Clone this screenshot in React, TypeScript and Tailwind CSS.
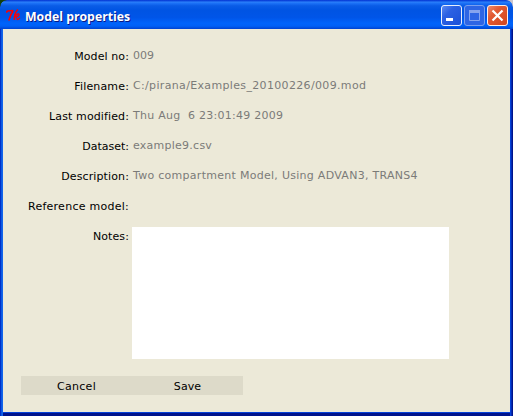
type RowProps = { label: string; value?: string; ls?: string; vs?: string };

function Label({ text, ls = "" }: { text: string; ls?: string }) {
  return (
    <div className="flex w-[126px] shrink-0 justify-end pt-px text-black">
      <span className={ls}>{text}</span>
    </div>
  );
}

function Row({ label, value = "", ls, vs = "" }: RowProps) {
  return (
    <div className="flex h-[30px] whitespace-pre leading-4">
      <Label text={label} ls={ls} />
      <span className={`ml-1 text-[#7b7b78] ${vs}`}>{value}</span>
    </div>
  );
}

function TitleBar() {
  return (
    <div className="flex h-[29px] shrink-0 items-center rounded-t-[7px] bg-[linear-gradient(180deg,#0a3fd8_0%,#0b45dc_3%,#2b80fa_7%,#1a6ff5_12%,#0a5ce6_20%,#0054e3_35%,#0055e8_60%,#0063fb_80%,#0060f6_90%,#0042d0_100%)] pl-[6px] pr-[5px]">
      <svg className="mt-[3px]" width="16" height="16" viewBox="0 0 16 16" fill="none" stroke="#ff0000" strokeLinejoin="bevel">
        <path d="M0.3 4.6 L1.5 3 L7 2.5" strokeWidth="1.7" />
        <path d="M7.2 2.6 L5 6.5 L2.8 12.5" strokeWidth="1.7" />
        <path d="M11.8 1.5 C9.8 3.5 8.3 7.5 8.2 12" strokeWidth="1.4" />
        <path d="M9 8.4 C10 6.2 12.8 5.2 13.2 6.4 C13.4 7.8 11 8.8 9.4 8.8 C11 9 10.4 11.6 11.8 11.6 L14 10" strokeWidth="1.2" />
      </svg>
      <span className="ml-[3px] mt-[2px] flex-1 origin-left scale-x-[0.945] whitespace-pre font-['Open_Sans',sans-serif] text-[13px] font-bold leading-4 text-white [text-shadow:1px_1px_0_#0a1883]">
        Model properties
      </span>
      <div className="mt-[2px] flex gap-[2px]">
        <svg width="21" height="21" viewBox="0 0 21 21">
          <defs>
            <linearGradient id="blue" x1="0" y1="0" x2="1" y2="1">
              <stop offset="0" stopColor="#5f8df2" />
              <stop offset="0.35" stopColor="#2c61e3" />
              <stop offset="1" stopColor="#1a50d8" />
            </linearGradient>
          </defs>
          <rect x="0.5" y="0.5" width="20" height="20" rx="2.5" fill="url(#blue)" stroke="#e8effd" />
          <rect x="5" y="13" width="7" height="3" fill="#fff" />
        </svg>
        <svg width="21" height="21" viewBox="0 0 21 21">
          <rect x="0.5" y="0.5" width="20" height="20" rx="2.5" fill="#2e65e4" stroke="#799eef" />
          <path d="M5.5 5 V15.5 H15.5 V5" fill="none" stroke="#86a4ee" />
          <rect x="5" y="5" width="11" height="3" fill="#86a4ee" />
        </svg>
        <svg width="21" height="21" viewBox="0 0 21 21">
          <defs>
            <linearGradient id="red" x1="0" y1="0" x2="1" y2="1">
              <stop offset="0" stopColor="#ee8f72" />
              <stop offset="0.35" stopColor="#e25a34" />
              <stop offset="1" stopColor="#d0441a" />
            </linearGradient>
          </defs>
          <rect x="0.5" y="0.5" width="20" height="20" rx="2.5" fill="url(#red)" stroke="#fdeeea" />
          <path d="M5.5 5.5 L15.5 15.5 M15.5 5.5 L5.5 15.5" stroke="#fff" strokeWidth="2.2" />
        </svg>
      </div>
    </div>
  );
}

export default function App() {
  return (
    <div className="h-[416px] w-[513px] bg-[linear-gradient(90deg,#143f0c_50%,#c9c5cf_50%)] font-['DejaVu_Sans',sans-serif] text-[11px]">
      <div className="flex h-full w-full flex-col overflow-hidden rounded-t-[7px]">
        <TitleBar />
        <div className="flex flex-1 bg-[linear-gradient(90deg,#0030c8_0px,#0030c8_1px,#0855dd_1px,#1668f0_3px,#0441d8_3px,#0441d8_510px,#0441d8_511px,#00138c_512px)] pl-[3px] pr-[3px]">
          <div className="flex flex-1 flex-col border-b-[3px] border-[#00138c] bg-[#ece9d8] pt-[19px] shadow-[inset_0_-1px_0_#0441d8]">
            <Row label="Model no:" value="009" ls="tracking-[0.1px]" />
            <Row label="Filename:" value="C:/pirana/Examples_20100226/009.mod" ls="tracking-[0.15px]" vs="tracking-[0.34px]" />
            <Row label="Last modified:" value="Thu Aug  6 23:01:49 2009" ls="tracking-[0.12px]" vs="tracking-[0.26px]" />
            <Row label="Dataset:" value="example9.csv" vs="tracking-[0.25px]" />
            <Row label="Description:" value="Two compartment Model, Using ADVAN3, TRANS4" ls="tracking-[0.12px]" vs="tracking-[0.28px]" />
            <Row label="Reference model:" ls="tracking-[0.26px]" />
            <div className="-mt-px flex leading-4">
              <div className="pt-px">
                <Label text="Notes:" ls="tracking-[0.1px]" />
              </div>
              <textarea aria-label="Notes" className="ml-[3px] block h-[132px] w-[317px] resize-none bg-white outline-none" />
            </div>
            <div className="ml-[18px] mt-[17px] flex h-[19px] w-[222px] bg-[#dddac9] pt-px leading-[19px] text-black">
              <button className="w-[111px] tracking-[0.3px]">Cancel</button>
              <button className="w-[111px] tracking-[0.1px]">Save</button>
            </div>
          </div>
        </div>
      </div>
    </div>
  );
}
